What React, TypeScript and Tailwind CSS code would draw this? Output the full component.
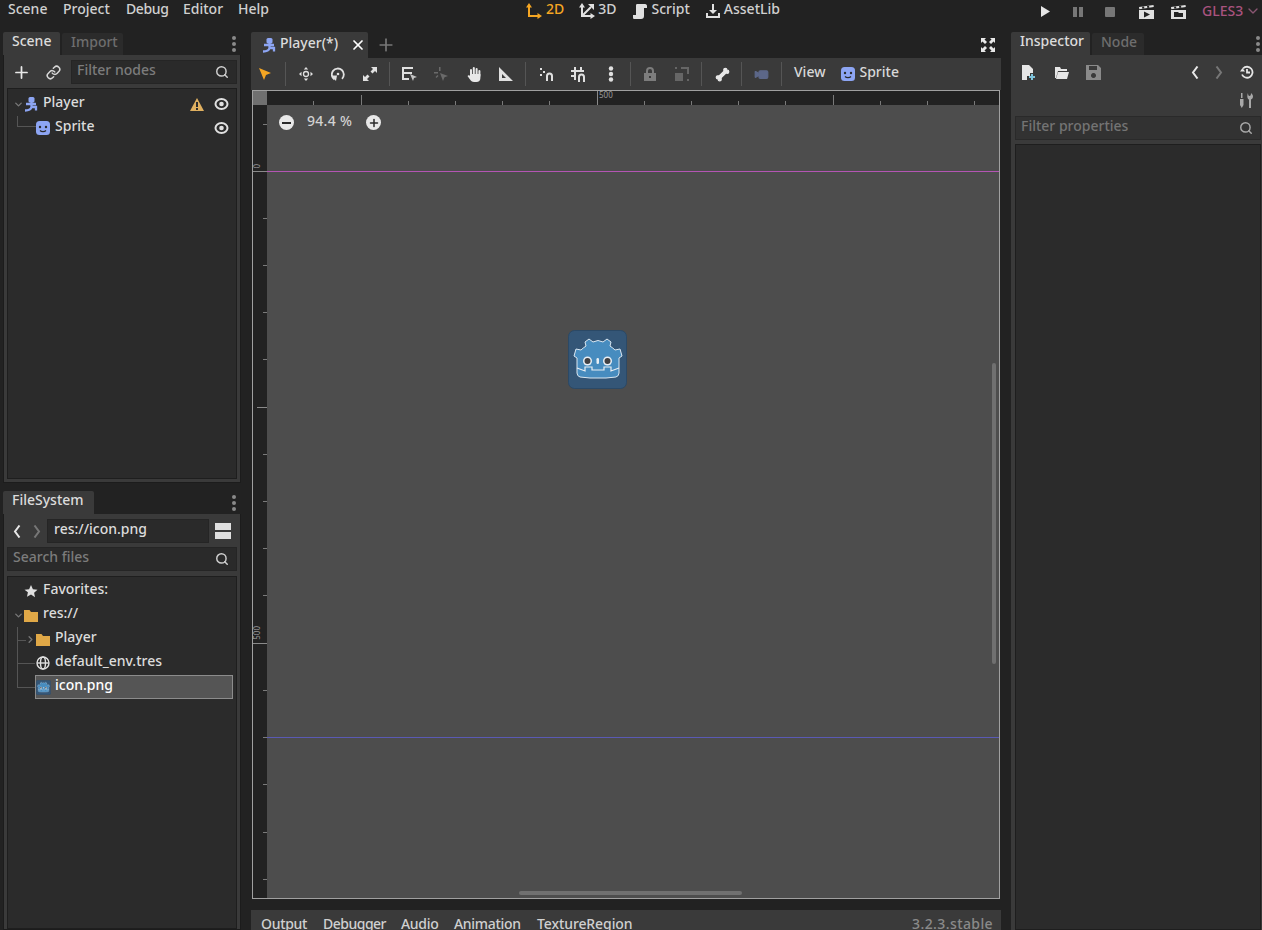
import React from "react";
import { ChevronDown, ChevronRight, Plus, X, Search, Link, Bone, Video } from "lucide-react";

const Dots = () => (
  <div className="flex flex-col gap-[2px]">
    <span className="w-1 h-1 rounded-full bg-[#8a8a8a]" />
    <span className="w-1 h-1 rounded-full bg-[#8a8a8a]" />
    <span className="w-1 h-1 rounded-full bg-[#8a8a8a]" />
  </div>
);

const PlayerIcon = () => (
  <svg width="14" height="15" viewBox="0 0 14 15">
    <rect x="4.500" y="0" width="6" height="5.500" rx="1.500" fill="#8da5f3" />
    <path d="M2 7h10M7.500 5v5h4.500v3.500M7.500 10c-.5 2-2.500 3.500-6.500 3.500" stroke="#8da5f3" strokeWidth="2.300" fill="none" />
  </svg>
);

const SpriteIcon = () => (
  <svg width="14" height="14" viewBox="0 0 14 14">
    <rect width="14" height="14" rx="3.500" fill="#8da5f3" />
    <circle cx="4" cy="6" r="1.200" fill="#2a2a2a" />
    <circle cx="10" cy="6" r="1.200" fill="#2a2a2a" />
    <path d="M4 9.500c1.500 1.500 4.500 1.500 6 0" stroke="#2a2a2a" strokeWidth="1.200" fill="none" />
  </svg>
);

const FolderIcon = () => (
  <svg width="14" height="13" viewBox="0 0 14 13">
    <path d="M0 1h5.500l1.500 2h7v10H0z" fill="#e0a847" />
  </svg>
);

const EyeIcon = () => (
  <svg width="15" height="14" viewBox="0 0 15 14" fill="none">
    <ellipse cx="7.500" cy="7" rx="6" ry="5" stroke="#e0e0e0" strokeWidth="2" />
    <circle cx="7.500" cy="7" r="2.300" fill="#e0e0e0" />
  </svg>
);

const ThinChevron = ({ dir, color }: { dir: "left" | "right"; color: string }) => (
  <svg width="8" height="13" viewBox="0 0 8 13" fill="none" stroke={color} strokeWidth="2">
    <path d={dir === "left" ? "M6.500 .5L2 6.500l4.500 6" : "M1.500 .5L6 6.500l-4.500 6"} />
  </svg>
);

const GodotIcon = ({ size = 60 }: { size?: number }) => (
  <svg width={size} height={size} viewBox="0 0 60 60">
    <rect x="0.500" y="0.500" width="58" height="58" rx="6" fill="#345677" stroke="#2b4966" />
    <path
      d="M21 9L25 12Q30 9 35 12L39 9L43 12L42 16Q45 18 47 20L52 19L54 26L51 28L51 43Q51 46 48 47L38 48L22 48L12 47Q9 46 9 43L9 28L6 26L8 19L13 20Q15 18 18 16L17 12Z"
      fill="#478cbf"
      stroke="#dbe7f1"
      strokeWidth="1"
      strokeLinejoin="round"
    />
    <path d="M9 38L17 41L17 37L24 37L24 40L36 40L36 37L43 37L43 41L51 38" fill="none" stroke="#e8eef4" strokeWidth="1.200" />
    <circle cx="19.500" cy="31" r="4.500" fill="#e8eef4" />
    <circle cx="39.500" cy="31" r="4.500" fill="#e8eef4" />
    <circle cx="19.500" cy="31" r="3" fill="#414042" />
    <circle cx="39.500" cy="31" r="3" fill="#414042" />
    <rect x="28.500" y="28" width="2.500" height="6" rx="1.200" fill="#e8eef4" />
  </svg>
);

const SelectIcon = ({ color = "#e0e0e0" }: { color?: string }) => (
  <svg width="14" height="14" viewBox="0 0 14 14">
    <path d="M1 1l12 5-5 2-2 5z" fill={color} />
  </svg>
);

const MoveIcon = () => (
  <svg width="14" height="14" viewBox="0 0 14 14" fill="#e0e0e0">
    <path d="M7 0l2.200 2.500H4.800zM7 14l2.200-2.500H4.800zM0 7l2.500-2.200v4.400zM14 7l-2.500-2.200v4.400z" />
    <circle cx="7" cy="7" r="2.500" fill="none" stroke="#e0e0e0" strokeWidth="1.300" />
  </svg>
);

const RotateIcon = () => (
  <svg width="14" height="14" viewBox="0 0 14 14" fill="none" stroke="#e0e0e0" strokeWidth="1.800">
    <path d="M3.500 12.500A6 6 0 1 1 11 11.800" />
    <circle cx="7" cy="7" r="1.300" fill="#e0e0e0" stroke="none" />
    <path d="M0 8.500h6l-1 5.500z" fill="#e0e0e0" stroke="none" />
  </svg>
);

const ScaleIcon = () => (
  <svg width="14" height="14" viewBox="0 0 14 14" fill="#e0e0e0">
    <path d="M8 0h6v6l-2-2-2.500 2.500-2-2L10 2zM0 14V8l2 2 2.500-2.500 2 2L4 12l2 2z" />
  </svg>
);

const ListSelectIcon = () => (
  <svg width="16" height="15" viewBox="0 0 16 15" fill="#e0e0e0">
    <path d="M0 0h11v2H2v3h8v2H2v4h5v2H0z" />
    <path d="M8 7l7 3-3 1-1 3z" fill="#c4c4c4" />
  </svg>
);

const GroupSelectIcon = () => (
  <svg width="16" height="15" viewBox="0 0 16 15" fill="#6a6a6a">
    <path d="M5 0h1.500v4H5zM0 5h4v1.500H0zM1.500 10l2-2 1 1-2 2z" />
    <path d="M6 6l8 3-3.500 1.200L9 14z" />
  </svg>
);

const HandIcon = () => (
  <svg width="14" height="15" viewBox="0 0 14 15" fill="#e8e8e8">
    <rect x="3" y="2" width="2" height="8" rx="1" />
    <rect x="5.800" y="0" width="2" height="8" rx="1" />
    <rect x="8.600" y="1" width="2" height="8" rx="1" />
    <rect x="11.400" y="3" width="2" height="7" rx="1" />
    <path d="M3 7h10.400v4c0 2.500-1.500 4-4 4H7c-2 0-3-1-4-2.500L.5 9l1.500-1 1 1z" />
  </svg>
);

const RulerIcon = () => (
  <svg width="14" height="14" viewBox="0 0 14 14" fill="#e0e0e0">
    <path fillRule="evenodd" d="M0 0l14 14H0zM3 7v4h4z" />
  </svg>
);

const SnapIcon = () => (
  <svg width="14" height="14" viewBox="0 0 14 14" fill="#e0e0e0">
    <rect x="0" y="1" width="2" height="2" />
    <rect x="3" y="4" width="2" height="2" />
    <rect x="0" y="7" width="2" height="2" />
    <path d="M6 14V9a3.500 3.500 0 0 1 7 0v5h-2V9a1.500 1.500 0 0 0-3 0v5z" />
  </svg>
);

const GridSnapIcon = () => (
  <svg width="16" height="15" viewBox="0 0 16 15" fill="#e0e0e0">
    <path d="M3 0h2v13H3zM0 3h13v2H0zM0 8h5v2H0zM9 0h2v5H9z" />
    <path d="M7 15V10a3.500 3.500 0 0 1 7 0v5h-2v-5a1.500 1.500 0 0 0-3 0v5z" />
  </svg>
);

const VDotsIcon = () => (
  <svg width="6" height="16" viewBox="0 0 6 16" fill="#e0e0e0">
    <circle cx="3" cy="2.500" r="2.200" />
    <circle cx="3" cy="8" r="2.200" />
    <circle cx="3" cy="13.500" r="2.200" />
  </svg>
);

const LockIcon = () => (
  <svg width="12" height="14" viewBox="0 0 12 14">
    <path d="M3 6V4a3 3 0 0 1 6 0v2" fill="none" stroke="#7c7c7c" strokeWidth="2" />
    <path fillRule="evenodd" d="M0 6h12v8H0zM5 9v2h2V9z" fill="#7c7c7c" />
  </svg>
);

const GroupIcon = () => (
  <svg width="14" height="14" viewBox="0 0 14 14" fill="#666">
    <path d="M0 6h8v8H0zM6 0h8v2H6zM12 2h2v5h-2zM12 12h2v2h-2zM0 0h2v2H0z" />
  </svg>
);

const ExpandIcon = () => (
  <svg width="14" height="14" viewBox="0 0 14 14" fill="#e8e8e8">
    <path d="M0 0h5L3.500 1.500 6 4 4 6 1.500 3.500 0 5zM14 0v5l-1.500-1.500L10 6 8 4l2.500-2.500L9 0zM0 14V9l1.500 1.500L4 8l2 2-2.500 2.500L5 14zM14 14H9l1.500-1.500L8 10l2-2 2.500 2.500L14 9z" />
  </svg>
);

const AxisIcon = ({ color }: { color: string }) => (
  <svg width="16" height="16" viewBox="0 0 16 16" fill="none" stroke={color} strokeWidth="2">
    <path d="M3 4v9h9" />
    <path d="M0 4.500L3 0l3 4.500M11.500 10L16 13l-4.500 3" fill={color} stroke="none" />
  </svg>
);

const Axis3Icon = () => (
  <svg width="16" height="16" viewBox="0 0 16 16" fill="none" stroke="#e0e0e0" strokeWidth="2">
    <path d="M3 4v9h9M3 13L12 4" />
    <path d="M0 4.500L3 0l3 4.500M11.500 10L16 13l-4.500 3M9 1h6v6z" fill="#e0e0e0" stroke="none" />
  </svg>
);

const ScriptIcon = () => (
  <svg width="14" height="16" viewBox="0 0 14 16" fill="#e0e0e0">
    <path d="M4 1h8c1.500 0 2 1 2 2v2h-3v8c0 2-1 3-3 3H1c-1 0-1-1-1-2V12h3V3c0-1 0-2 1-2z" />
  </svg>
);

const AssetIcon = () => (
  <svg width="16" height="16" viewBox="0 0 16 16" fill="#e0e0e0">
    <path d="M7 1h2v6h3l-4 4-4-4h3z" />
    <path d="M1 10h2v3h10v-3h2v5H1z" />
  </svg>
);

const ClapIcon = ({ kind }: { kind: "play" | "folder" }) => (
  <svg width="15" height="14" viewBox="0 0 15 14">
    <path d="M0 2l14.500-2 .3 2L.3 4.200zM0 5h15v9H0z" fill="#e0e0e0" />
    <path d="M3 1.800l2-.3.400 2-2 .3zM8 1.100l2-.3.400 2-2 .3z" fill="#222" />
    {kind === "play" ? <path d="M5 6.500l6 3-6 3z" fill="#222" /> : <path d="M3 7h4l1 1h4v4H3z" fill="#222" />}
  </svg>
);

const ToolBtn = ({ children }: { children: React.ReactNode }) => (
  <div className="w-8 h-6 flex items-center justify-center">{children}</div>
);

const TreeRow = ({
  label,
  icon,
  indent,
  right,
  chev,
}: {
  label: string;
  icon: React.ReactNode;
  indent: string;
  right?: React.ReactNode;
  chev?: React.ReactNode;
}) => (
  <div className={`h-6 flex items-center ${indent}`}>
    <div className="w-3 flex items-center justify-center">{chev}</div>
    <div className="w-[14px] flex items-center justify-center mr-[5px]">{icon}</div>
    <span className="mb-[5px] text-[#dcdcdc]">{label}</span>
    {right}
  </div>
);

export default function App() {
  const hTicks = [313, 408, 455, 502, 549, 644, 691, 738, 785, 880, 927, 974];
  const hMid = [361, 833];
  const vTicks = [124, 218, 265, 312, 359, 454, 501, 548, 595, 690, 737, 784, 832, 879];
  return (
    <div
      className="w-[1262px] h-[930px] overflow-hidden bg-[#222222] text-[14px] font-medium text-[#d0d0d0] flex flex-col"
      style={{ fontFamily: '"Noto Sans", sans-serif' }}
    >
      {/* menu bar */}
      <div className="h-[32px] shrink-0 flex items-start relative leading-[18px]">
        <div className="flex pl-2">
          <span className="w-[55px]">Scene</span>
          <span className="w-[63px]">Project</span>
          <span className="w-[57px] tracking-[-0.4px]">Debug</span>
          <span className="w-[55px]">Editor</span>
          <span>Help</span>
        </div>
        <div className="absolute left-[526px] top-0 flex gap-[15px]">
          <span className="flex items-start gap-[4px] text-[#f5a623]">
            <span className="mt-[3px]">
              <AxisIcon color="#f5a623" />
            </span>
            2D
          </span>
          <span className="flex items-start gap-[3px]">
            <span className="mt-[3px]">
              <Axis3Icon />
            </span>
            3D
          </span>
          <span className="ml-[1px] flex items-start gap-[5px]">
            <span className="mt-[3px]">
              <ScriptIcon />
            </span>
            Script
          </span>
          <span className="flex items-start gap-[3px]">
            <span className="mt-[3px]">
              <AssetIcon />
            </span>
            AssetLib
          </span>
        </div>
        <div className="absolute left-[1040px] top-[6px] flex items-center gap-[22px]">
          <svg width="11" height="11" viewBox="0 0 11 11">
            <path d="M1 0l9 5.500L1 11z" fill="#e6e6e6" />
          </svg>
          <div className="flex gap-[2px]">
            <span className="w-1 h-[10px] bg-[#777]" />
            <span className="w-1 h-[10px] bg-[#777]" />
          </div>
          <span className="w-[10px] h-[10px] bg-[#777] rounded-[1px]" />
        </div>
        <div className="absolute left-[1139px] top-[5px] flex gap-[17px]">
          <ClapIcon kind="play" />
          <ClapIcon kind="folder" />
        </div>
        <div className="absolute left-[1202px] top-[2px] flex items-center gap-[2px] text-[#a9537f]">
          GLES3
          <ChevronDown size={16} className="text-[#8a5672]" />
        </div>
      </div>

      <div className="flex-1 flex min-h-0">
        {/* left docks */}
        <div className="w-[238px] ml-[3px] shrink-0 flex flex-col">
          <div className="h-[451px] flex flex-col shrink-0">
            <div className="h-[23px] flex items-end relative shrink-0">
              <div className="h-[23px] w-[57px] bg-[#3a3a3a] pl-[9px] leading-[18px] text-[#dcdcdc] rounded-t-[2px]">Scene</div>
              <div className="h-[22px] w-[61px] ml-[2px] bg-[#2b2b2b] pl-[9px] leading-[18px] text-[#6e6e6e] rounded-t-[2px]">Import</div>
              <div className="absolute right-[5px] top-[4px]">
                <Dots />
              </div>
            </div>
            <div className="flex-1 bg-[#3a3a3a] px-[3px] pb-[3px] pt-[5px] border border-[#1c1c1c] border-t-0 flex flex-col">
              <div className="h-[24px] flex items-center shrink-0 mb-[4px]">
                <Plus size={19} className="ml-[5px] text-[#e8e8e8]" strokeWidth={2.2} />
                <Link size={15} className="ml-[15px] text-[#d8d8d8]" strokeWidth={2.4} />
                <div className="ml-[10px] h-6 w-[166px] bg-[#2a2a2a] border border-[#252525] flex items-center justify-between pl-[5px] pr-[7px] text-[#7c7c7c]">
                  <span className="mb-[6px]">Filter nodes</span>
                  <Search size={14} className="text-[#cfcfcf]" strokeWidth={2.5} />
                </div>
              </div>
              <div className="flex-1 bg-[#2b2b2b] border border-[#1e1e1e] pt-[3px] relative">
                <div className="absolute left-[9px] top-[27px] w-[19px] h-[11px] border-l border-b border-[#555]" />
                <TreeRow
                  label="Player"
                  indent="pl-[4px]"
                  chev={<ChevronDown size={11} className="text-[#777]" strokeWidth={3} />}
                  icon={<PlayerIcon />}
                  right={
                    <div className="ml-auto flex items-center gap-[10px] pr-[7px]">
                      <svg width="14" height="13" viewBox="0 0 14 13">
                        <path d="M7 0l7 13H0z" fill="#e0b060" />
                        <rect x="6" y="4" width="2" height="5" fill="#2b2b2b" />
                        <rect x="6" y="10" width="2" height="2" fill="#2b2b2b" />
                      </svg>
                      <EyeIcon />
                    </div>
                  }
                />
                <TreeRow
                  label="Sprite"
                  indent="pl-[16px]"
                  icon={<SpriteIcon />}
                  right={
                    <div className="ml-auto pr-[7px] flex">
                      <EyeIcon />
                    </div>
                  }
                />
              </div>
            </div>
          </div>

          <div className="flex-1 min-h-0 flex flex-col mt-[8px]">
            <div className="h-[23px] flex items-end relative shrink-0">
              <div className="h-[23px] w-[91px] bg-[#3a3a3a] pl-[9px] leading-[18px] text-[#dcdcdc] rounded-t-[2px]">FileSystem</div>
              <div className="absolute right-[5px] top-[4px]">
                <Dots />
              </div>
            </div>
            <div className="flex-1 bg-[#3a3a3a] px-[3px] pt-[5px] border border-[#1c1c1c] border-t-0 flex flex-col">
              <div className="h-[24px] flex items-center shrink-0">
                <span className="ml-[6px] flex">
                  <ThinChevron dir="left" color="#e8e8e8" />
                </span>
                <span className="ml-[12px] flex">
                  <ThinChevron dir="right" color="#777" />
                </span>
                <div className="ml-[6px] h-6 w-[162px] bg-[#2a2a2a] border border-[#252525] pl-[6px] leading-[18px] text-[#dcdcdc]">res://icon.png</div>
                <div className="ml-[6px] flex flex-col gap-[2px]">
                  <span className="w-4 h-[7px] bg-[#e0e0e0]" />
                  <span className="w-4 h-[7px] bg-[#e0e0e0]" />
                </div>
              </div>
              <div className="h-6 mt-[4px] shrink-0 bg-[#2a2a2a] border border-[#252525] flex items-center justify-between pl-[5px] pr-[7px] text-[#7c7c7c]">
                <span className="mb-[5px]">Search files</span>
                <Search size={14} className="text-[#cfcfcf]" strokeWidth={2.5} />
              </div>
              <div className="flex-1 mt-[5px] bg-[#2b2b2b] border border-[#1e1e1e] pt-[2px] relative">
                <div className="absolute left-[9px] top-[50px] h-[60px] border-l border-[#555]" />
                <div className="absolute left-[9px] top-[63px] w-[9px] border-t border-[#555]" />
                <div className="absolute left-[9px] top-[86px] w-[18px] border-t border-[#555]" />
                <div className="absolute left-[9px] top-[110px] w-[18px] border-t border-[#555]" />
                <TreeRow
                  label="Favorites:"
                  indent="pl-[4px]"
                  icon={
                    <svg width="14" height="14" viewBox="0 0 14 14">
                      <path d="M7 1l1.900 4.200 4.600.5-3.400 3.100.9 4.500L7 10.600 3 12.800l.9-4.500L.5 5.700l4.600-.5z" fill="#e0e0e0" />
                    </svg>
                  }
                />
                <TreeRow label="res://" indent="pl-[4px]" chev={<ChevronDown size={11} className="text-[#777]" strokeWidth={3} />} icon={<FolderIcon />} />
                <TreeRow label="Player" indent="pl-[16px]" chev={<ChevronRight size={11} className="text-[#777]" strokeWidth={3} />} icon={<FolderIcon />} />
                <TreeRow
                  label="default_env.tres"
                  indent="pl-[16px]"
                  icon={
                    <svg width="14" height="14" viewBox="0 0 14 14" fill="none" stroke="#e0e0e0" strokeWidth="1.400">
                      <circle cx="7" cy="7" r="6" />
                      <ellipse cx="7" cy="7" rx="2.500" ry="6" />
                      <path d="M1 7h12" />
                    </svg>
                  }
                />
                <div className="h-[24px] ml-[27px] mr-[3px] bg-[#555555] border border-[#8c8c8c] flex items-center">
                  <span className="mr-[4px] flex">
                    <GodotIcon size={15} />
                  </span>
                  <span className="mb-[5px] text-white">icon.png</span>
                </div>
              </div>
            </div>
          </div>
        </div>

        {/* center */}
        <div className="w-[750px] ml-[10px] shrink-0 flex flex-col">
          <div className="h-[26px] flex items-end shrink-0 relative">
            <div className="h-[26px] w-[117px] bg-[#3a3a3a] flex items-center pl-[11px] gap-[4px] text-[#dcdcdc] rounded-t-[2px]">
              <PlayerIcon />
              <span className="-mt-[5px]">Player(*)</span>
              <X size={16} className="ml-[8px] text-white" strokeWidth={2.6} />
            </div>
            <Plus size={20} className="ml-[8px] mb-[3px] text-[#777]" strokeWidth={2} />
            <div className="absolute right-[6px] top-[6px] flex">
              <ExpandIcon />
            </div>
          </div>
          <div className="h-[32px] shrink-0 bg-[#3a3a3a] flex items-center">
            <div className="w-[28px] h-6 flex items-center justify-center">
              <SelectIcon color="#f5a623" />
            </div>
            <div className="w-px h-6 bg-[#555] ml-[6px] mr-[4px]" />
            <ToolBtn><MoveIcon /></ToolBtn>
            <ToolBtn><RotateIcon /></ToolBtn>
            <ToolBtn><ScaleIcon /></ToolBtn>
            <div className="w-px h-6 bg-[#555] ml-[3px] mr-[4px]" />
            <ToolBtn><ListSelectIcon /></ToolBtn>
            <ToolBtn><GroupSelectIcon /></ToolBtn>
            <ToolBtn><HandIcon /></ToolBtn>
            <ToolBtn><RulerIcon /></ToolBtn>
            <div className="w-px h-6 bg-[#555] ml-[3px] mr-[5px]" />
            <ToolBtn><SnapIcon /></ToolBtn>
            <ToolBtn><GridSnapIcon /></ToolBtn>
            <ToolBtn><VDotsIcon /></ToolBtn>
            <div className="w-px h-6 bg-[#555] ml-[3px] mr-[3px]" />
            <ToolBtn><LockIcon /></ToolBtn>
            <ToolBtn><GroupIcon /></ToolBtn>
            <div className="w-px h-6 bg-[#555] ml-[3px] mr-[4px]" />
            <ToolBtn><Bone size={15} className="text-[#e8e8e8]" fill="#e8e8e8" /></ToolBtn>
            <div className="w-px h-6 bg-[#555] ml-[3px] mr-[3px]" />
            <ToolBtn><Video size={15} className="text-[#5c6788] scale-x-[-1]" fill="#5c6788" /></ToolBtn>
            <div className="w-px h-6 bg-[#555] ml-[4px]" />
            <span className="ml-[12px] mb-[5px] text-[#d8d8d8]">View</span>
            <span className="ml-[16px] flex items-center gap-[4px] text-[#d8d8d8]">
              <SpriteIcon />
              <span className="mb-[6px]">Sprite</span>
            </span>
          </div>

          {/* viewport */}
          <div className="h-[809px] mx-[1px] shrink-0 border border-[#a0a0a0] bg-[#4d4d4d] relative overflow-hidden">
            <div className="h-[14px] bg-[#222] relative">
              <div className="absolute left-0 top-0 w-[14px] h-[14px] bg-[#707070]" />
              {hTicks.map((x) => (
                <div key={x} className="absolute bottom-0 w-px h-[4px] bg-[#7a7a7a]" style={{ left: x - 253 }} />
              ))}
              {hMid.map((x) => (
                <div key={x} className="absolute bottom-0 w-px h-[10px] bg-[#7a7a7a]" style={{ left: x - 253 }} />
              ))}
              <div className="absolute bottom-0 left-[344px] w-px h-[14px] bg-[#8a8a8a]" />
              <span className="absolute left-[346px] -top-[1px] text-[8px] leading-[10px] font-normal text-[#999]">500</span>
            </div>
            <div className="absolute left-0 top-[14px] bottom-0 w-[14px] bg-[#222]">
              {vTicks.map((y) => (
                <div key={y} className="absolute right-0 h-px w-[4px] bg-[#7a7a7a]" style={{ top: y - 105 }} />
              ))}
              <div className="absolute right-0 top-[66px] h-px w-[14px] bg-[#8a8a8a]" />
              <div className="absolute right-0 top-[302px] h-px w-[10px] bg-[#8a8a8a]" />
              <div className="absolute right-0 top-[538px] h-px w-[14px] bg-[#8a8a8a]" />
              <span className="absolute left-0 top-[59px] rotate-180 [writing-mode:vertical-rl] text-[8px] leading-[8px] font-normal text-[#999]">0</span>
              <span className="absolute left-0 top-[521px] rotate-180 [writing-mode:vertical-rl] text-[8px] leading-[8px] font-normal text-[#999]">500</span>
            </div>
            <div className="absolute left-[14px] right-0 top-[80px] h-px bg-[#b455b4]" />
            <div className="absolute left-[14px] right-0 top-[646px] h-px bg-[#5a5ab4]" />
            <div className="absolute left-[26px] top-[19px] flex items-center text-[#d2d2d2]">
              <span className="w-[15px] h-[15px] rounded-full bg-[#e8e8e8] flex items-center justify-center">
                <span className="w-[9px] h-[2px] bg-[#2a2a2a]" />
              </span>
              <span className="ml-[13px] mb-[4px] w-[46px] tracking-[0.3px] whitespace-nowrap">94.4 %</span>
              <span className="ml-[13px] w-[15px] h-[15px] rounded-full bg-[#e8e8e8] flex items-center justify-center">
                <Plus size={12} className="text-[#2a2a2a]" strokeWidth={3} />
              </span>
            </div>
            <div className="absolute left-[315px] top-[239px]">
              <GodotIcon />
            </div>
            <div className="absolute right-[3px] top-[272px] w-[4px] h-[301px] rounded-full bg-[#707070]" />
            <div className="absolute left-[266px] bottom-[3px] w-[223px] h-[4px] rounded-full bg-[#707070]" />
          </div>

          <div className="flex-1 mt-[11px] bg-[#3a3a3a] flex items-start pl-[10px] pt-[4px] text-[#d0d0d0] leading-[20px] relative">
            <span className="w-[62px] tracking-[-0.3px]">Output</span>
            <span className="w-[78px] tracking-[-0.5px]">Debugger</span>
            <span className="w-[53px] tracking-[-0.3px]">Audio</span>
            <span className="w-[83px] tracking-[-0.3px]">Animation</span>
            <span className="tracking-[-0.1px]">TextureRegion</span>
            <span className="absolute right-[8px] top-[4px] tracking-[0.4px] text-[#8a8a8a]">3.2.3.stable</span>
          </div>
        </div>

        {/* inspector */}
        <div className="w-[251px] ml-[10px] shrink-0 flex flex-col">
          <div className="h-[23px] flex items-end relative shrink-0">
            <div className="h-[23px] w-[79px] bg-[#3a3a3a] pl-[9px] leading-[18px] text-[#dcdcdc] rounded-t-[2px]">Inspector</div>
            <div className="h-[22px] w-[52px] ml-[2px] bg-[#2b2b2b] pl-[9px] leading-[18px] text-[#6e6e6e] rounded-t-[2px]">Node</div>
            <div className="absolute right-[2px] top-[4px]">
              <Dots />
            </div>
          </div>
          <div className="flex-1 bg-[#3a3a3a] flex flex-col pl-[4px] pr-[1px] pt-[5px]">
            <div className="h-[24px] flex items-center shrink-0">
              <svg width="14" height="15" viewBox="0 0 14 15" className="ml-[7px]">
                <path d="M0 0h7l4 4v4H8v3H5v4H0z" fill="#e6e6e6" />
                <path d="M9 9h2v2h2v2h-2v2H9v-2H7v-2h2z" fill="#7fc4dc" />
              </svg>
              <svg width="15" height="13" viewBox="0 0 15 13" className="ml-[18px]">
                <path d="M1 1h5l1 2h6v2H4L2 12H1zM4 6h11l-2 7H2z" fill="#e6e6e6" />
              </svg>
              <svg width="15" height="15" viewBox="0 0 15 15" className="ml-[17px]">
                <path fillRule="evenodd" d="M0 0h12l3 3v12H0zM3 1v4h8V1zM7.500 8a2.500 2.500 0 1 0 .01 0z" fill="#8a8a8a" />
              </svg>
              <span className="ml-[90px] flex">
                <ThinChevron dir="left" color="#e8e8e8" />
              </span>
              <span className="ml-[16px] flex">
                <ThinChevron dir="right" color="#777" />
              </span>
              <svg width="14" height="14" viewBox="0 0 14 14" fill="none" stroke="#e6e6e6" strokeWidth="1.800" className="ml-[17px]">
                <path d="M3 3.500A5.500 5.500 0 1 1 2 9.500" />
                <path d="M0 6.500h5L2.500 3z" fill="#e6e6e6" stroke="none" />
                <path d="M7 4v3.500h3" />
              </svg>
            </div>
            <div className="h-[24px] mt-[4px] flex items-center justify-end shrink-0 pr-[8px]">
              <svg width="13" height="15" viewBox="0 0 13 15" fill="#a8a8a8">
                <path d="M1 0h1.500v5H1zM0 6h3.500v6L1.800 15 0 12zM8 0c0 2 .5 3 1.500 3S11 2 11 0c1 1 2 2 2 3.500S12 6 11 6.500V15H9V6.500C7 6 7 2 8 0z" />
              </svg>
            </div>
            <div className="h-[24px] mt-[4px] shrink-0 border border-[#2a2a2a] bg-[#323232] flex items-center justify-between pl-[5px] pr-[7px] text-[#747474]">
              <span className="mb-[6px]">Filter properties</span>
              <Search size={14} className="text-[#a8a8a8]" strokeWidth={2.5} />
            </div>
            <div className="flex-1 mt-[4px] bg-[#2b2b2b] border border-[#1e1e1e]" />
          </div>
        </div>
      </div>
    </div>
  );
}
